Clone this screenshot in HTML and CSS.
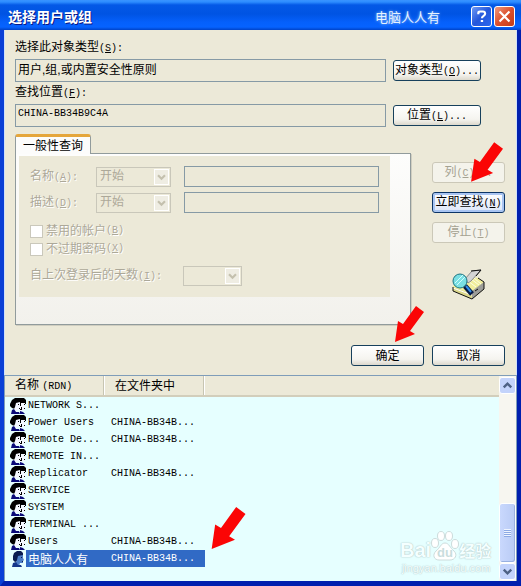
FILE: index.html
```html
<!DOCTYPE html>
<html lang="zh-CN">
<head>
<meta charset="utf-8">
<title>选择用户或组</title>
<link rel="stylesheet" href="styles.css">
</head>
<body>
<svg class="defs" aria-hidden="true">
  <symbol id="arrow" viewBox="0 0 30 36">
    <path d="M22 0L30 6L16 25L21 28L1 36L4 15L9 18Z" fill="#fb0505"/>
  </symbol>
  <symbol id="chevron" viewBox="0 0 15 16">
    <path d="M3.500 6L7.500 10L11.500 6" fill="none" stroke="currentColor" stroke-width="2.500"/>
  </symbol>
  <symbol id="group" viewBox="0 0 16 16">
    <path d="M7 3L9 0h5l2 2v4h-3l-3 4-3-2z" fill="#000"/>
    <path d="M11 5h4v2l1 2-1 1v2h-3v2h-2V8z" fill="#f4f8ff"/>
    <path d="M14 6h1v1h-1zM14 10h1v1h-1z" fill="#000"/>
    <path d="M0 6L2 2l3-2h4l2 2v2L7 5 6 9l-1 2-3-1-2-2z" fill="#000"/>
    <path d="M6 5l4-1v3l1 2-1 1v2H7l-1 2H4v-3l1-2z" fill="#f4f8ff"/>
    <path d="M8 6h1v1H8zM9 10h1v1H9z" fill="#000"/>
    <path d="M1 16l1-4 2-1 2 3h3l1 2zM10 13l3 1 2 2h-5z" fill="#0a0a78"/>
    <path d="M10 5h1v3h-1zM11 9h1v3h-2v-1h1z" fill="#000"/>
  </symbol>
  <symbol id="user" viewBox="0 0 16 16">
    <path d="M3 5l1-3 3-2h4l2 2v3L9 6 8 10l-3 1-2-2z" fill="#0a1c50"/>
    <path d="M8 5l5-1v3l1 2-1 1v2h-3l-1 3H6v-4l1-2z" fill="#4b7cc4"/>
    <path d="M11 6h1v1h-1zM12 10h1v1h-1z" fill="#0a1c50"/>
    <path d="M2 16l1-4 3-1 2 3h3l1 2z" fill="#14368a"/>
  </symbol>
</svg>

<main class="window">
  <header class="titlebar">
    <h1>选择用户或组</h1>
    <span class="signature">电脑人人有</span>
    <button class="caption help" aria-label="帮助"><svg viewBox="0 0 21 21"><path d="M7 8V6.500Q7 5 9 5h3q2.500 0 2.500 2.500c0 2.500-3.500 2-3.500 5M9.700 15.500h2.600" fill="none" stroke="#fff" stroke-width="2.400"/></svg></button>
    <button class="caption close" aria-label="关闭"><svg viewBox="0 0 21 21"><path d="M5 5l11 11M16 5l-11 11" fill="none" stroke="#fff" stroke-width="2.400"/></svg></button>
  </header>

  <form class="form">
    <div class="field">
      <label for="types">选择此对象类型<span class="en">(<u>S</u>):</span></label>
      <div class="line">
        <input id="types" class="text" value="用户,组,或内置安全性原则" readonly>
        <button type="button" class="btn wide">对象类型<span class="en">(<u>O</u>)...</span></button>
      </div>
    </div>
    <div class="field">
      <label for="place">查找位置<span class="en">(<u>F</u>):</span></label>
      <div class="line">
        <input id="place" class="text latin" value="CHINA-BB34B9C4A" readonly>
        <button type="button" class="btn wide">位置<span class="en">(<u>L</u>)...</span></button>
      </div>
    </div>

    <div class="query">
      <section class="tabs">
        <button type="button" class="tab">一般性查询</button>
        <div class="panel">
          <fieldset class="inner" disabled>
            <div class="row">
              <label for="name">名称<span class="en">(<u>A</u>):</span></label>
              <span class="combo"><select aria-label="名称条件"><option>开始</option></select><svg><use href="#chevron"/></svg></span>
              <input id="name" class="text">
            </div>
            <div class="row">
              <label for="desc">描述<span class="en">(<u>D</u>):</span></label>
              <span class="combo"><select aria-label="描述条件"><option>开始</option></select><svg><use href="#chevron"/></svg></span>
              <input id="desc" class="text">
            </div>
            <div class="checks">
              <label><input type="checkbox">禁用的帐户<span class="en">(<u>B</u>)</span></label>
              <label><input type="checkbox">不过期密码<span class="en">(<u>X</u>)</span></label>
            </div>
            <div class="row days">
              <label for="days">自上次登录后的天数<span class="en">(<u>I</u>):</span></label>
              <span class="combo"><select id="days"><option></option></select><svg><use href="#chevron"/></svg></span>
            </div>
          </fieldset>
        </div>
      </section>
      <div class="side">
        <button type="button" class="btn" disabled>列<span class="en">(<u>C</u>)...</span></button>
        <button type="button" class="btn default">立即查找<span class="en">(<u>N</u>)</span></button>
        <button type="button" class="btn" disabled>停止<span class="en">(<u>T</u>)</span></button>
        <svg class="finder" viewBox="0 0 33 32">
          <path d="M1 17L16 7L26 9L32 13V20L20 30L1 22Z" fill="#f1ee9c"/>
          <path d="M20 22L32 13V20L20 30Z" fill="#9d9d98"/>
          <path d="M1 18L20 25V30L1 22Z" fill="#dcd88c"/>
          <path d="M1 19L20 26" stroke="#fff" fill="none"/>
          <path d="M19 10l8 6M22 9l7 6M16 12l8 6" stroke="#fdfde2" fill="none"/>
          <path d="M13 10L20 2L29 1L19 12L16 14Z" fill="#d4d4d4" stroke="#8a8a8a"/>
          <path d="M19 2L29 1L24 7M26 9L32 13V20L20 30L1 22V18M23 22l3-2" fill="none" stroke="#111"/>
          <circle cx="8" cy="12" r="7" fill="#7adfe3" stroke="#1c7482"/>
          <path d="M3 14l8-8M5 16l8-8" stroke="#d0ffff"/>
          <path d="M13 17l7 8" stroke="#071a45" stroke-width="5"/>
          <path d="M14 17l5 6" stroke="#2f8ee9" stroke-width="2"/>
        </svg>
      </div>
    </div>
    <div class="actions">
      <button type="button" class="btn">确定</button>
      <button type="button" class="btn">取消</button>
    </div>
  </form>

  <section class="results">
    <div class="list">
      <table>
        <colgroup><col class="col"><col class="col"><col></colgroup>
        <thead><tr><th>名称 <span class="en">(RDN)</span></th><th>在文件夹中</th><th></th></tr></thead>
        <tbody>
          <tr><td><div class="item"><svg><use href="#group"/></svg><span>NETWORK S...</span></div></td><td></td><td></td></tr>
          <tr><td><div class="item"><svg><use href="#group"/></svg><span>Power Users</span></div></td><td>CHINA-BB34B...</td><td></td></tr>
          <tr><td><div class="item"><svg><use href="#group"/></svg><span>Remote De...</span></div></td><td>CHINA-BB34B...</td><td></td></tr>
          <tr><td><div class="item"><svg><use href="#group"/></svg><span>REMOTE IN...</span></div></td><td></td><td></td></tr>
          <tr><td><div class="item"><svg><use href="#group"/></svg><span>Replicator</span></div></td><td>CHINA-BB34B...</td><td></td></tr>
          <tr><td><div class="item"><svg><use href="#group"/></svg><span>SERVICE</span></div></td><td></td><td></td></tr>
          <tr><td><div class="item"><svg><use href="#group"/></svg><span>SYSTEM</span></div></td><td></td><td></td></tr>
          <tr><td><div class="item"><svg><use href="#group"/></svg><span>TERMINAL ...</span></div></td><td></td><td></td></tr>
          <tr><td><div class="item"><svg><use href="#group"/></svg><span>Users</span></div></td><td>CHINA-BB34B...</td><td></td></tr>
          <tr class="selected"><td><div class="item"><svg><use href="#user"/></svg><span class="cn">电脑人人有</span></div></td><td>CHINA-BB34B...</td><td></td></tr>
        </tbody>
      </table>
    </div>
    <div class="scrollbar">
      <button class="step" aria-label="向上滚动"><svg class="up"><use href="#chevron"/></svg></button>
      <div class="track"><div class="thumb"><i></i></div></div>
      <button class="step" aria-label="向下滚动"><svg><use href="#chevron"/></svg></button>
    </div>
    <div class="brand">
      <div class="logo"><span>Bai</span><svg viewBox="0 0 28 30"><g fill="#fff" stroke="#ccdcdc"><ellipse cx="4" cy="12" rx="3.500" ry="4.500"/><ellipse cx="10" cy="5" rx="3.500" ry="4.500"/><ellipse cx="18" cy="5" rx="3.500" ry="4.500"/><ellipse cx="24" cy="13" rx="3.500" ry="4.500"/><path d="M14 12c4 0 5 5 9 8 4 4 1 9-4 9H8c-5 0-7-5-3-9 4-3 5-8 9-8z"/></g><text x="14" y="26" text-anchor="middle">du</text></svg><span class="zh">经验</span></div>
      <div class="url">jingyan.baidu.com</div>
    </div>
  </section>

  <svg class="pointer to-find"><use href="#arrow"/></svg>
  <svg class="pointer to-ok"><use href="#arrow"/></svg>
  <svg class="pointer to-user"><use href="#arrow"/></svg>
</main>
</body>
</html>
```
FILE: styles.css
```css
* { box-sizing: border-box; }

body {
  margin: 0;
  font: 12px/16px "Liberation Sans", "Noto Sans CJK SC", sans-serif;
  color: #000;
  background: #0831d9;
}

button, input, select { font: inherit; color: inherit; margin: 0; }
svg { display: block; }
.defs { position: absolute; width: 0; height: 0; }
.en, .latin { font-family: "Liberation Mono", monospace; font-size: 10px; }

.window {
  position: relative;
  display: flex;
  flex-direction: column;
  min-height: 100vh;
  border: solid #001fae;
  border-width: 0 4px 5px;
  border-left-color: #0a3fd6;
  background: #ece9d8;
}

.titlebar {
  display: flex;
  align-items: center;
  height: 30px;
  margin: 0 -4px;
  padding: 3px 6px 0 8px;
  color: #fff;
  background: linear-gradient(#3a93ff 0, #2d8cff 2px, #0458e6 5px, #0054e3 14px, #0560fb 22px, #0663ff 27px, #0043c8 30px);
}
.titlebar h1 { flex: 1; margin: 0; font-size: 14px; line-height: 20px; text-shadow: 1px 1px #0a1883; }
.signature { margin-right: 29px; font-family: "Noto Sans CJK SC", sans-serif; font-size: 13px; color: #e4f2ff; text-shadow: 0 0 3px #9ccbff; }
.caption { width: 21px; height: 21px; margin-left: 2px; padding: 0; border: 1px solid #fff; border-radius: 3px; }
.caption svg { width: 19px; height: 19px; }
.help { background: linear-gradient(135deg, #6f9af5, #2457db 50%, #2a66ee); }
.close { background: linear-gradient(135deg, #ee9a80, #dc4f2c 50%, #c23c18); }

.form { padding: 9px 11px 9px 10px; border: solid #cfe0fa; border-width: 0 1px; }
.field { margin-bottom: 2px; }
.field label { display: block; height: 20px; }
.line { display: flex; align-items: center; gap: 7px; margin-right: 24px; }
.text { flex: 1; min-width: 0; height: 23px; padding: 0 2px 5px; border: 1px solid #869aa5; background: transparent; outline: 0; }

.btn {
  height: 21px;
  padding: 0;
  border: 1px solid #17405c;
  border-radius: 3px;
  background: linear-gradient(#fff, #f5f4ef 70%, #dcd8cc);
  line-height: 18px;
  white-space: nowrap;
}
.btn.wide { width: 88px; }
.btn:disabled { color: #a5a291; border-color: #cbc8b8; background: #f4f3eb; }
.btn.default { border-color: #0c3567; box-shadow: inset 0 0 0 2px #a9c5f2; background: linear-gradient(#fff, #dce6f8); }

.query { display: flex; gap: 21px; padding-top: 5px; }
.tabs { flex: 1; min-width: 0; }
.tab { position: relative; display: block; width: 76px; height: 20px; margin-bottom: -1px; padding: 0; border: 1px solid #919b9c; border-top: 3px solid #e5a63b; border-bottom: 0; border-radius: 3px 3px 0 0; background: #fcfcfb; line-height: 14px; }
.panel { height: 172px; padding: 2px 20px 27px 3px; border: 1px solid #919b9c; background: linear-gradient(#fdfdfc, #f2f1ec); box-shadow: 1px 1px #d0cec0; }
.inner { height: 141px; margin: 0; padding: 10px 11px 0; border: 0; color: #aca899; background: #ece9d8; text-shadow: 1px 1px #fff; }
.row { display: grid; grid-template-columns: 66px 75px 1fr; align-items: center; height: 21px; margin-bottom: 5px; }
.row .text { height: 21px; margin-left: 13px; }
.combo { position: relative; display: block; height: 20px; }
.combo select { width: 100%; height: 20px; padding: 0 3px 2px; appearance: none; border: 1px solid #c9c7ba; border-radius: 0; background: #ece9d8; opacity: 1; color: #aca899; }
.combo svg { position: absolute; top: 2px; right: 2px; width: 15px; height: 16px; background: #efede3; border: 1px solid #fff; color: #c4c0ae; }
.checks { padding-top: 4px; }
.checks label { display: flex; align-items: center; height: 18px; }
.checks input { appearance: none; width: 13px; height: 13px; margin-right: 3px; border: 1px solid #cac8bb; background: #fff; }
.days { grid-template-columns: 153px 59px; margin: 7px 0 0; }

.side { display: flex; flex-direction: column; gap: 9px; width: 73px; padding-top: 28px; }
.finder { width: 33px; height: 32px; margin: 17px 0 0 20px; }
.actions { display: flex; justify-content: flex-end; gap: 8px; margin-top: 20px; }
.actions .btn { width: 73px; }

.results { position: relative; display: flex; flex: 1; border: solid #7f9db9; border-width: 1px 1px 0; background: #e6ffff; }
.list { flex: 1; min-width: 0; }
table { width: 100%; border-collapse: collapse; table-layout: fixed; font: 10px/15px "Liberation Mono", monospace; }
.col { width: 100px; }
th { height: 20px; padding: 0 10px; background: linear-gradient(90deg, #ece9d8 98px, #c7c5b2 98px, #c7c5b2 99px, #fff 99px); border-bottom: 2px solid #d2cebb; font: 12px/16px "Liberation Sans", "Noto Sans CJK SC", sans-serif; text-align: left; white-space: nowrap; }
th:last-child { background: #ece9d8; }
td { height: 17px; padding: 0 0 0 6px; white-space: nowrap; }
td:first-child { padding: 0 0 0 5px; }
.item { display: flex; align-items: center; height: 17px; }
.item svg { width: 16px; height: 16px; flex: none; }
.item span { flex: 1; padding-left: 2px; line-height: 17px; }
.item .cn { font: 12px/17px "Noto Sans CJK SC", sans-serif; }
.selected .item span, .selected td:nth-child(2) { color: #fff; background: #316ac5; }

.scrollbar { display: flex; flex-direction: column; width: 17px; padding: 1px 0; background: #f7f6f0; }
.step { display: grid; place-items: center; width: 17px; height: 17px; padding: 0; border: 1px solid #fff; border-radius: 3px; background: #c3d3fb; color: #4d6185; }
.step svg { width: 15px; height: 15px; }
.up { transform: rotate(180deg); }
.track { display: flex; flex: 1; align-items: flex-end; }
.thumb { display: grid; place-items: center; width: 17px; height: 60px; border: 1px solid #fff; border-radius: 3px; background: linear-gradient(90deg, #c9d8fd, #b9cbf5); box-shadow: inset -1px -1px #98b0e0; }
.thumb i { width: 7px; height: 8px; background: repeating-linear-gradient(#eef4ff 0, #eef4ff 1px, #8ca9e4 1px, #8ca9e4 2px); }

.brand { position: absolute; right: 24px; bottom: 6px; width: 92px; color: #f4ffff; text-shadow: 0 0 1px #a9c0c0, 0 0 2px #c2d6d6; }
.logo { display: flex; align-items: flex-end; font: bold 20px/22px "Liberation Sans", sans-serif; }
.logo svg { width: 28px; height: 30px; }
.logo text { font: bold 13px "Liberation Sans", sans-serif; fill: #c9dddd; text-shadow: none; }
.logo .zh { font: bold 16px/22px "Noto Sans CJK SC", sans-serif; }
.url { font: 11px/14px "Liberation Sans", sans-serif; text-align: center; }

.pointer { position: absolute; }
.to-find { right: 14px; top: 142px; width: 33px; height: 40px; }
.to-ok { right: 93px; top: 306px; width: 30px; height: 36px; }
.to-user { left: 206px; bottom: 32px; width: 36px; height: 42px; }
```
